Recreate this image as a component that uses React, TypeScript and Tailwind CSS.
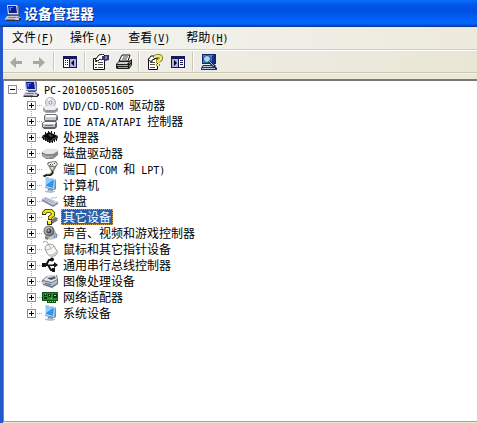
import type { ReactNode } from "react";

type IconProps = { children: ReactNode; size?: number };

function Glyph({ children, size = 16 }: IconProps) {
  return (
    <svg
      width={size}
      height={size}
      viewBox="0 0 16 16"
      className="shrink-0"
      aria-hidden="true"
    >
      {children}
    </svg>
  );
}

function ComputerIcon() {
  return (
    <Glyph>
      <path d="M2 0h10l2 1v9H3z" fill="#6d7290" />
      <path d="M2 0h10l1 9H3z" fill="#d6d8e6" />
      <path d="M3 1h8l1 7H4z" fill="#0a1c9c" />
      <path d="M4 2h4v1H6v3H5z" fill="#4d78f2" />
      <path d="M5 10h8v1H5z" fill="#555a70" />
      <path d="M2 11h11l3 2v2H0v-1z" fill="#c9cad6" />
      <path d="M0 15h15v1H1zM14 13h2v2h-2z" fill="#30303c" />
      <path d="M3 12h8v1H3zM1 14h9v1H1z" fill="#7b7f92" />
      <path d="M12 12h2v1h-2z" fill="#32b13a" />
    </Glyph>
  );
}

function DiscIcon() {
  return (
    <Glyph>
      <circle cx="8.500" cy="5.500" r="5" fill="#dfe1e6" stroke="#a3a6ae" />
      <path d="M8.500 5.500L5 2.200 8 1z" fill="#fff" />
      <circle cx="8.500" cy="5.500" r="1.500" fill="#fff" stroke="#85888f" />
      <path d="M1 10l3-1h8l4 2v3l-3 2H4l-3-2z" fill="#a4a6ad" />
      <path d="M1 10l3-1h8l4 1-3 3H4z" fill="#eeeff2" />
      <path d="M4 14h9l2-2" stroke="#797b82" fill="none" />
    </Glyph>
  );
}

function ControllerIcon() {
  return (
    <Glyph>
      <path d="M4 1h10l2 2v4l-2 1H3L2 7V3z" fill="#6d7072" />
      <path d="M4 2h9l2 1-1 1H3z" fill="#ffffff" />
      <path d="M3 4h11v3H3z" fill="#c8cbcc" />
      <path d="M3 8h11l1 2v4l-2 2H2l-2-2v-4z" fill="#5e6163" />
      <path d="M3 9h10l1 1-1 1H1v-1z" fill="#ffffff" />
      <path d="M1 11h12v3H1z" fill="#c0c4c6" />
      <path d="M3 12h8v1H3z" fill="#707375" />
    </Glyph>
  );
}

function ChipIcon() {
  return (
    <Glyph>
      <path d="M0 7l7-4 9 4-8 5z" fill="#080808" />
      <path d="M0 7l8 5 8-5v2l-8 5-8-5z" fill="#2b2b2b" />
      <path
        d="M1.500 8v3M3.500 9v3M5.500 10v3M7.500 11v3M10.500 11v3M12.500 10v3M14.500 9v3M3.500 5V3M6.500 4V2M9.500 4V2M12.500 5V3"
        stroke="#111"
      />
      <path d="M6 6l2-1 3 2-2 1z" fill="#4c4c4c" />
    </Glyph>
  );
}

function DriveIcon() {
  return (
    <Glyph>
      <path d="M0 7l5-3h8l3 2v4l-5 4H4L0 11z" fill="#85888b" />
      <path d="M0 7l5-3h8l3 2-5 3H4z" fill="#e4e6e7" />
      <path d="M1 9l3 2h7v2H4l-3-2z" fill="#aaaeb0" />
      <path d="M8 12h2v1H8z" fill="#38a844" />
    </Glyph>
  );
}

function PortIcon() {
  return (
    <Glyph>
      <path d="M6 1l8-1 2 3-2 3-2 4H9L7 6 5 3z" fill="#77796f" />
      <path d="M7 2l6-1 2 2-2 2-7-1z" fill="#f0f0ea" />
      <path d="M8 6h4l-1 3h-1z" fill="#d4d4cb" />
      <path d="M8 3h1v1H8zM10 3h1v1h-1zM12 2h1v1h-1z" fill="#4e4f48" />
      <path d="M10.500 10v2l-2 2h-4l-3 1.500" fill="none" stroke="#1e1e16" strokeWidth="2" />
      <path d="M9.500 11l-2 2h-3" fill="none" stroke="#b8ad62" />
    </Glyph>
  );
}

function MonitorIcon() {
  return (
    <Glyph>
      <path d="M3 0l10 2 1 1v9l-2 1-9-2z" fill="#6f8fb4" />
      <path d="M3 0l10 2-1 10-9-2z" fill="#c9e4fb" />
      <path d="M4 1l8 2-1 8-7-2z" fill="#2f94ee" />
      <path d="M4 1l7 2-7 5z" fill="#8bcdfd" />
      <path d="M6 11l5 1v2H6z" fill="#7f93a8" />
      <path d="M3 14l4-1 6 1v1l-4 1-6-1z" fill="#b0bfd0" />
    </Glyph>
  );
}

function KeyboardIcon() {
  return (
    <Glyph>
      <path d="M0 6l3-2 13 5v2l-5 3L0 8z" fill="#85879f" />
      <path d="M0 6l3-2 13 5-5 3z" fill="#dcdeed" />
      <path
        d="M3 5l9 4M2 6l9 4M5 5l-2 2M7 6L5 8M9 7L7 9M11 8l-2 2M13 9l-2 2"
        stroke="#a5a8c2"
        fill="none"
      />
      <path d="M9 6c1-3 4 0 6-2" fill="none" stroke="#b1b2c0" />
    </Glyph>
  );
}

function UnknownIcon() {
  return (
    <Glyph>
      <path d="M9 11l4-3 3 1-1 3-5 3H6z" fill="#77777c" />
      <path
        d="M2 6V4l2-2h5l2 2v2L8 8.500V11"
        fill="none"
        stroke="#373500"
        strokeWidth="4"
      />
      <path
        d="M2 5V4l2-2h5l2 2v2L8 8.500V10"
        fill="none"
        stroke="#f0e700"
        strokeWidth="2.500"
      />
      <path d="M5 12h5v4H5z" fill="#373500" />
      <path d="M6 12h3v3H6z" fill="#fff200" />
    </Glyph>
  );
}

function SpeakerIcon() {
  return (
    <Glyph>
      <path d="M6 8l7-2 3 4-3 4-6 1z" fill="#c4c6d0" />
      <circle cx="7" cy="6" r="5.500" fill="#66686b" />
      <circle cx="6.500" cy="5.500" r="4" fill="#aeb1b4" />
      <circle cx="7" cy="6" r="2.500" fill="#404244" />
      <circle cx="6.500" cy="5.500" r="1" fill="#d6d8d9" />
      <path d="M3 11l4 1-1 3-3-1z" fill="#818387" />
      <path d="M11 9q3 1 1 4M13 8q3 2 1 5" fill="none" stroke="#7175a1" />
    </Glyph>
  );
}

function MouseIcon() {
  return (
    <Glyph>
      <path d="M1 1q6-2 5 4" fill="none" stroke="#a0a09b" />
      <path
        d="M5 4q5-2 7 1l3 5q1 4-3 5-5 1-7-3L3 8q0-3 2-4z"
        fill="#f8f8f5"
        stroke="#94948e"
      />
      <path d="M4 9q5 0 8-4M7 4l2 4" fill="none" stroke="#b4b4ad" />
      <path d="M8 14q5 1 6-3" fill="none" stroke="#cdcdc6" strokeWidth="2" />
    </Glyph>
  );
}

function UsbIcon() {
  return (
    <Glyph>
      <path d="M2 8h12M4 8l3-5h2M6 8l3 5h2" fill="none" stroke="#151515" strokeWidth="2" />
      <path d="M0 6h4v4H0zM12 5l4 3-4 3z" fill="#151515" />
      <circle cx="10" cy="2.500" r="2" fill="#151515" />
      <path d="M10 11h3v4h-3z" fill="#151515" />
      <path d="M6 7h5v1H6z" fill="#8c8c8c" />
    </Glyph>
  );
}

function ScannerIcon() {
  return (
    <Glyph>
      <path d="M0 7l5-4 10-1 1 5v4l-6 4-9-3z" fill="#71757d" />
      <path d="M1 7l5-4 8-1 1 4-5 3z" fill="#e3e6eb" />
      <path d="M5 5l7-2 2 2-5 2z" fill="#424a55" />
      <path d="M1 8l9 2 5-3v3l-5 3-9-2z" fill="#b9bec7" />
      <path d="M3 10l6 1v1l-6-1z" fill="#346bb0" />
      <path d="M7 4l5-1v1L8 5z" fill="#9bd0ed" />
    </Glyph>
  );
}

function NetworkIcon() {
  return (
    <Glyph>
      <path d="M0 3h16v9h-2v2H5v-2H0z" fill="#0d5512" />
      <path d="M1 4h14v7H1z" fill="#238a26" />
      <path d="M2 5h3v2H2zM6 5h3v3H6zM11 5h4v4h-4zM2 8h3v2H2z" fill="#0a350d" />
      <path d="M3 5h1v1H3zM7 6h1v1H7zM12 6h2v1h-2zM9 9h1v1H9z" fill="#a0dc66" />
      <path d="M6 12h1v1H6zM8 12h1v1H8zM10 12h1v1h-1zM12 12h1v1h-1z" fill="#c9c858" />
    </Glyph>
  );
}

function ArrowIcon({ forward = false }: { forward?: boolean }) {
  return (
    <Glyph>
      <path
        d={
          forward
            ? "M2 7h6V3l6 5.500L8 14v-4H2z"
            : "M14 7H8V3L2 8.500 8 14v-4h6z"
        }
        fill="#aaa99d"
      />
    </Glyph>
  );
}

function PaneIcon({ flipped = false }: { flipped?: boolean }) {
  return (
    <Glyph>
      <path d="M1 2h14v12H1z" fill="#17175c" />
      <path d="M2 5h12v8H2z" fill="#aeb2e4" />
      {flipped ? (
        <>
          <path d="M9 5h5v8H9z" fill="#fff" />
          <path d="M8 4h1v9H8zM10 6h3v1h-3zM10 8h3v1h-3zM10 10h3v1h-3z" fill="#17175c" />
          <path d="M4 6v6l3-3z" fill="#000" />
        </>
      ) : (
        <>
          <path d="M2 5h5v8H2z" fill="#fff" />
          <path d="M7 4h1v9H7zM3 6h1v1H3zM5 6h1v1H5zM3 8h1v1H3zM5 8h1v1H5zM3 10h1v1H3zM5 10h1v1H5z" fill="#17175c" />
          <path d="M12 6v6L9 9z" fill="#000" />
        </>
      )}
    </Glyph>
  );
}

function PropertiesIcon() {
  return (
    <Glyph>
      <path d="M.5 4.500h11v11H.5z" fill="#fff" stroke="#111" />
      <path d="M2 7h2v1H2zM2 10h2v1H2zM2 13h2v1H2z" fill="#333" />
      <path d="M5 8.500h5M5 10.500h5M5 13.500h5" stroke="#555" />
      <path d="M2 6l4-5 4-1 2 2-3 4-2-1-2 2z" fill="#fff" stroke="#111" />
      <path d="M9 2h3V1h4v5l-4 1-3-2z" fill="#34366e" />
      <path d="M12 2h2v3h-2z" fill="#8084bb" />
    </Glyph>
  );
}

function PrinterIcon() {
  return (
    <Glyph>
      <path d="M6 1h8l-2 6H3z" fill="#fff" stroke="#111" />
      <path d="M7 3h5M6 5h5" stroke="#444" />
      <path d="M3 7h10l3-2v6l-3 4H1l-1-1v-4z" fill="#1d1d1b" />
      <path d="M3 8h10l-2 2H1z" fill="#d4d3c7" />
      <path d="M1 11h11v1H1zM2 13h10v1H2z" fill="#a5a49a" />
      <path d="M8 11h2v1H8z" fill="#ded622" />
      <path d="M13 9l2-2v1l-2 2zM13 12l2-2v1l-2 2z" fill="#b9b8ac" />
    </Glyph>
  );
}

function HelpIcon() {
  return (
    <Glyph>
      <path d="M1.500 4.500h9v11h-9z" fill="#fff" stroke="#111" />
      <path d="M3 8.500h5M3 10.500h5M3 13.500h5" stroke="#555" />
      <path d="M1 6l3-4h3l1 3-3 1v2z" fill="#fff" stroke="#111" />
      <path
        d="M8 4V3q1-1 3-1 3 0 3 2 0 2-3 3v2M11 10v2"
        fill="none"
        stroke="#6b681c"
        strokeWidth="4"
      />
      <path
        d="M8 4V3q1-1 3-1 3 0 3 2 0 2-3 3v2M11 10v2"
        fill="none"
        stroke="#f4ea68"
        strokeWidth="2.500"
      />
    </Glyph>
  );
}

function ScanIcon() {
  return (
    <Glyph>
      <path d="M1 0h14v10H1z" fill="#102778" />
      <path d="M2 1h10v8H2z" fill="#3c7fbc" />
      <path d="M11 2h2v7h-2z" fill="#112e9b" />
      <path d="M2 11h11l3 3v2H0v-2z" fill="#182f76" />
      <path d="M2 12h10v1H2zM1 14h13v1H1z" fill="#b5c2db" />
      <circle cx="6" cy="5" r="3.500" fill="#a9d7ee" stroke="#27547f" />
      <path d="M8 7l6 6" stroke="#17315b" strokeWidth="3" />
      <path d="M8 7l5 5" stroke="#92b7d4" />
    </Glyph>
  );
}

const menus = [
  { label: "文件", accessKey: "F" },
  { label: "操作", accessKey: "A" },
  { label: "查看", accessKey: "V" },
  { label: "帮助", accessKey: "H" },
];

const toolGroups = [
  [
    { label: "后退", icon: <ArrowIcon /> },
    { label: "前进", icon: <ArrowIcon forward /> },
  ],
  [{ label: "显示控制台树", icon: <PaneIcon /> }],
  [
    { label: "属性", icon: <PropertiesIcon /> },
    { label: "打印", icon: <PrinterIcon /> },
  ],
  [
    { label: "帮助", icon: <HelpIcon /> },
    { label: "显示操作窗格", icon: <PaneIcon flipped /> },
  ],
  [{ label: "扫描检测硬件改动", icon: <ScanIcon /> }],
];

const devices = [
  { name: "DVD/CD-ROM 驱动器", icon: <DiscIcon /> },
  { name: "IDE ATA/ATAPI 控制器", icon: <ControllerIcon /> },
  { name: "处理器", icon: <ChipIcon /> },
  { name: "磁盘驱动器", icon: <DriveIcon /> },
  { name: "端口 (COM 和 LPT)", icon: <PortIcon /> },
  { name: "计算机", icon: <MonitorIcon /> },
  { name: "键盘", icon: <KeyboardIcon /> },
  { name: "其它设备", icon: <UnknownIcon />, selected: true },
  { name: "声音、视频和游戏控制器", icon: <SpeakerIcon /> },
  { name: "鼠标和其它指针设备", icon: <MouseIcon /> },
  { name: "通用串行总线控制器", icon: <UsbIcon /> },
  { name: "图像处理设备", icon: <ScannerIcon /> },
  { name: "网络适配器", icon: <NetworkIcon /> },
  { name: "系统设备", icon: <MonitorIcon /> },
];

/* Latin runs take a half-width monospaced face beside the full-width Chinese. */
function MixedText({ text }: { text: string }) {
  const runs = text.match(/[\x20-\x7e]+|[^\x20-\x7e]+/g) ?? [];
  return (
    <>
      {runs.map((run, i) =>
        run.charCodeAt(0) < 127 ? (
          <span key={i} className="font-['DejaVu_Sans_Mono',monospace] text-[10px]">
            {run}
          </span>
        ) : (
          <span key={i}>{run}</span>
        ),
      )}
    </>
  );
}

function TreeRow({
  name,
  icon,
  expanded = false,
  selected = false,
}: {
  name: string;
  icon: ReactNode;
  expanded?: boolean;
  selected?: boolean;
}) {
  return (
    <div className="flex h-4 items-center">
      <button
        type="button"
        aria-label={(expanded ? "折叠 " : "展开 ") + name}
        aria-expanded={expanded}
        className="size-[9px] shrink-0 border border-[#8d8d86] bg-white"
      >
        <svg width="7" height="7" viewBox="0 0 7 7" className="block" aria-hidden="true">
          <path d={expanded ? "M1 3h5v1H1z" : "M1 3h5v1H1zM3 1h1v5H3z"} fill="#000" />
        </svg>
      </button>
      <span className="h-px w-[6px] shrink-0 bg-[repeating-linear-gradient(to_right,transparent_0_1px,#a8a8a0_1px_2px)]" />
      {icon}
      <span
        className={
          selected
            ? "ml-[3px] h-4 bg-[#2c5fa8] px-[2px] leading-4 whitespace-pre text-white outline-1 -outline-offset-1 outline-dotted outline-[#d0a050]"
            : "ml-[3px] h-4 px-[2px] leading-4 whitespace-pre"
        }
      >
        <MixedText text={name} />
      </span>
    </div>
  );
}

export default function App() {
  return (
    <div className="flex min-h-screen flex-col bg-[#ece9d8] font-['Noto_Sans_CJK_SC',sans-serif] text-[12px] text-black">
      <header className="flex h-[27px] items-center gap-[3px] border-b border-[#0a3c9a] bg-[linear-gradient(to_bottom,#0a6cf8_0%,#0054e6_22%,#0050e4_45%,#0260fb_72%,#0664ff_90%,#0046cc_100%)] pl-[5px]">
        <ComputerIcon />
        <h1 className="text-[14px] leading-5 font-bold text-white [text-shadow:1px_1px_0_#0a2a80]">
          设备管理器
        </h1>
      </header>
      <main className="flex flex-1 flex-col border-l-[3px] border-[#2258cc]">
        <nav
          aria-label="菜单"
          className="flex h-[23px] items-center gap-4 border-b border-[#d2cebc] bg-linear-to-r from-[#f4f4f3] to-[#edeadc] pl-[9px]"
        >
          {menus.map((menu) => (
            <button key={menu.accessKey} type="button" className="flex items-baseline leading-4">
              {menu.label}
              <span className="font-['DejaVu_Sans_Mono',monospace] text-[10px]">
                (<span className="underline underline-offset-2">{menu.accessKey}</span>)
              </span>
            </button>
          ))}
        </nav>
        <div
          role="toolbar"
          aria-label="工具栏"
          className="flex h-[23px] items-center border-t border-b border-t-white border-b-[#cbc7b4] bg-linear-to-r from-[#f1f1ef] to-[#e9e6d5] pl-px"
        >
          {toolGroups.map((group, i) => (
            <div key={i} className="flex items-center">
              {i > 0 && <span className="mx-[3px] h-[19px] w-[2px] border-l border-[#cbc8b8] bg-white" />}
              {group.map((tool) => (
                <button
                  key={tool.label}
                  type="button"
                  aria-label={tool.label}
                  className="flex h-5 w-[23px] items-center justify-center"
                >
                  {tool.icon}
                </button>
              ))}
            </div>
          ))}
        </div>
        <div className="h-[6px] border-t border-[#f6f4ea] bg-[#ebe8d8]" />
        <section className="mb-px flex-1 border-t-2 border-b border-l border-t-[#7b7a72] border-b-[#a5a394] border-l-[#85847c] bg-white">
          <div className="pl-1">
            <TreeRow name="PC-201005051605" icon={<ComputerIcon />} expanded />
          </div>
          <ul className="bg-[repeating-linear-gradient(to_bottom,#a8a8a0_0_1px,transparent_1px_2px)] bg-[length:1px_calc(100%-8px)] bg-[position:27px_0] bg-no-repeat pl-[23px]">
            {devices.map((device) => (
              <li key={device.name}>
                <TreeRow {...device} />
              </li>
            ))}
          </ul>
        </section>
      </main>
    </div>
  );
}
